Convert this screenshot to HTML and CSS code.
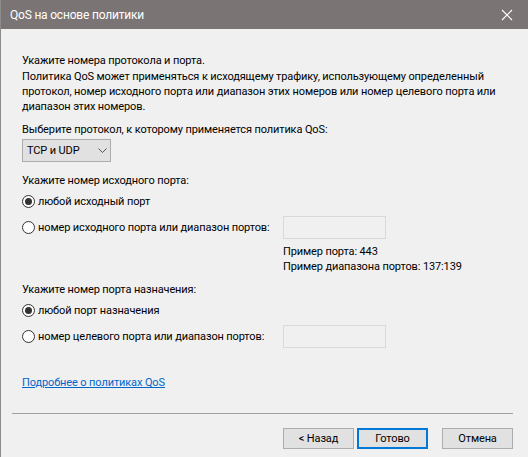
FILE: index.html
```html
<!DOCTYPE html>
<html lang="ru">
<head>
<meta charset="utf-8">
<title>QoS на основе политики</title>
<link rel="stylesheet" href="styles.css">
</head>
<body>
<div class="window">
  <div class="titlebar">
    <span class="title">QoS на основе политики</span>
    <svg class="close" width="12" height="12" viewBox="0 0 12 12"><path d="M1 1L11 11M11 1L1 11" stroke="#fff" stroke-width="1.1" fill="none"/></svg>
  </div>
  <div class="content">
    <p class="line">Укажите номера протокола и порта.</p>
    <p class="desc">Политика QoS может применяться к исходящему трафику, использующему определенный<br>протокол, номер исходного порта или диапазон этих номеров или номер целевого порта или<br>диапазон этих номеров.</p>
    <p class="line section">Выберите протокол, к которому применяется политика QoS:</p>
    <div class="select">
      <span>TCP и UDP</span>
      <svg width="9" height="5" viewBox="0 0 9 5"><path d="M0.5 0.5L4.5 4.5L8.5 0.5" stroke="#555" fill="none"/></svg>
    </div>

    <p class="line section after-select">Укажите номер исходного порта:</p>
    <div class="radio-row first"><span class="radio checked"></span><span>любой исходный порт</span></div>
    <div class="radio-row field-row">
      <div class="radio-label"><span class="radio"></span><span>номер исходного порта или диапазон портов:</span></div>
      <div class="textbox"></div>
    </div>
    <div class="hint">Пример порта: 443<br>Пример диапазона портов: 137:139</div>

    <p class="line section">Укажите номер порта назначения:</p>
    <div class="radio-row first"><span class="radio checked"></span><span>любой порт назначения</span></div>
    <div class="radio-row field-row">
      <div class="radio-label"><span class="radio"></span><span>номер целевого порта или диапазон портов:</span></div>
      <div class="textbox"></div>
    </div>

    <a class="link" href="#">Подробнее о политиках QoS</a>
  </div>
  <div class="footer">
    <div class="buttons">
      <button class="btn">&lt; Назад</button>
      <button class="btn default">Готово</button>
      <button class="btn cancel">Отмена</button>
    </div>
  </div>
</div>
</body>
</html>
```

FILE: styles.css
```css
html, body {
  margin: 0;
  padding: 0;
  background: #f0f0f0;
}

.window {
  width: 528px;
  height: 457px;
  box-sizing: border-box;
  border-left: 1px solid #8c8c8c;
  background: #f0f0f0;
  font-family: Roboto, "Noto Sans", sans-serif;
  font-size: 11px;
  letter-spacing: -0.12px;
  color: #000;
  display: flex;
  flex-direction: column;
  overflow: hidden;
  white-space: nowrap;
}

.titlebar {
  height: 29px;
  background: #7a7574;
  display: flex;
  align-items: center;
  justify-content: space-between;
  padding: 0 15px 0 10px;
  margin-left: -1px;
  flex: none;
}

.title {
  color: #fff;
  font-size: 12px;
  letter-spacing: -0.2px;
}

.content {
  padding: 24px 0 0 21px;
}

p {
  margin: 0;
}

.line,
.desc {
  line-height: 15px;
}

.desc {
  margin-top: 1px;
}

.section {
  margin-top: 8px;
}

.section.after-select {
  margin-top: 11px;
}

.select {
  margin-top: 2px;
  width: 89px;
  height: 23px;
  box-sizing: border-box;
  border: 1px solid #adadad;
  background: #e1e1e1;
  display: flex;
  align-items: center;
  justify-content: space-between;
  padding: 0 3px 0 4px;
}

.radio-row {
  display: flex;
  align-items: center;
  line-height: 15px;
}

.radio-row.first {
  margin-top: 6px;
}

.field-row {
  margin-top: 7px;
  height: 22px;
}

.radio-label {
  width: 261px;
  display: flex;
  align-items: center;
}

.radio {
  width: 13px;
  height: 13px;
  box-sizing: border-box;
  border: 1px solid #333;
  border-radius: 50%;
  background: #fff;
  margin-right: 3px;
  display: flex;
  align-items: center;
  justify-content: center;
  flex: none;
}

.radio.checked::after {
  content: "";
  width: 7px;
  height: 7px;
  border-radius: 50%;
  background: #333;
}

.textbox {
  width: 103px;
  height: 23px;
  box-sizing: border-box;
  border: 1px solid #d9d9d9;
  background: #f0f0f0;
}

.hint {
  margin: 6px 0 0 261px;
  line-height: 15px;
}

.link {
  display: inline-block;
  margin-top: 28px;
  color: #0066cc;
  text-decoration: underline;
  line-height: 15px;
}

.footer {
  flex: none;
  margin: auto 15px 0 11px;
  border-top: 1px solid #a0a0a0;
  padding: 14px 0 8px;
}

.buttons {
  display: flex;
  justify-content: flex-end;
  gap: 3px;
}

.btn {
  width: 71px;
  height: 21px;
  box-sizing: border-box;
  border: 1px solid #adadad;
  background: #e1e1e1;
  font-family: inherit;
  font-size: 11px;
  letter-spacing: -0.12px;
  color: #000;
  padding: 0;
}

.btn.default {
  border: 2px solid #0078d7;
}

.btn.cancel {
  margin-left: 11px;
}
```
